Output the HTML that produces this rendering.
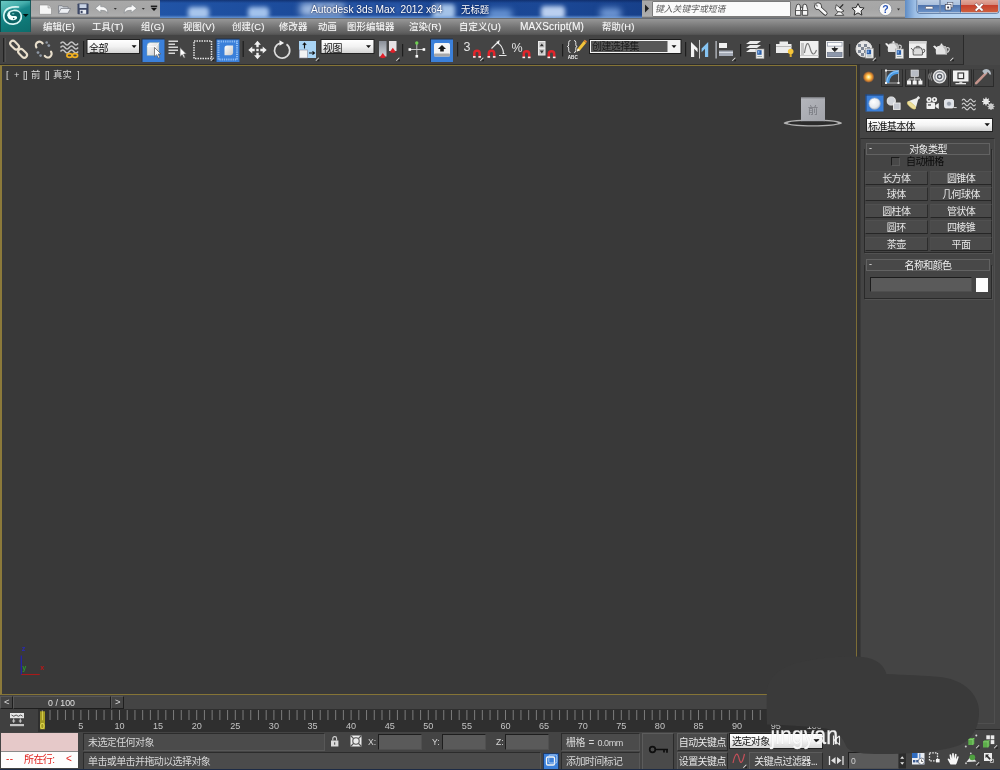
<!DOCTYPE html><html lang="zh"><head><meta charset="utf-8"><title>Autodesk 3ds Max 2012 x64 - 无标题</title><style>html,body{margin:0;padding:0;}
body{width:1000px;height:770px;overflow:hidden;background:#444;position:relative;font-family:"Liberation Sans","Noto Sans CJK SC",sans-serif;font-size:9.4px;color:#e4e4e4;}
div,span,svg{position:absolute;box-sizing:border-box;}
svg{overflow:visible;}
.t{white-space:nowrap;line-height:12px;will-change:transform;}
/* title */
#appbtn{left:0;top:0;width:31px;height:31.500px;background:linear-gradient(158deg,#6ac8c4 0%,#45aeac 26%,#16878a 40%,#0f7776 70%,#0d6d6c 100%);border-left:1px solid #0a4b4c;border-top:1px solid #0a4b4c;border-right:1px solid #1a5a5c;}
#qat{left:31px;top:0;width:129px;height:18px;background:linear-gradient(#707070 0,#a8a8a8 1.200px,#a6a6a6 9px,#aeaeae 16px,#8a8a8a 17.200px,#5e5e5e 18px);}
#titleblue{left:160px;top:0;width:482px;height:18px;background:linear-gradient(90deg,#2154a6 0,#1c4c9c 25%,#194592 50%,#1b4896 80%,#17408a 100%);overflow:hidden;}
#search{left:642px;top:0;width:170px;height:18px;background:linear-gradient(#707070 0,#a8a8a8 1.200px,#a6a6a6 9px,#aeaeae 16px,#8a8a8a 17.200px,#5e5e5e 18px);}
#infoc{left:791px;top:0;width:114px;height:18px;background:linear-gradient(#707070 0,#a8a8a8 1.200px,#a6a6a6 9px,#aeaeae 16px,#8a8a8a 17.200px,#5e5e5e 18px);}
#winctl{left:905px;top:0;width:95px;height:18px;background:linear-gradient(90deg,#5f8cc4 0,#9dbfe6 10px,#b4d2f2 30px,#c0daf4 100%);}
#menubar{left:31px;top:18px;width:969px;height:17px;background:linear-gradient(#39424e 0,#969696 1px,#8a8a8a 4px,#747474 9px,#5e5e5e 15px,#505050 17px);}
#menubar .t{top:3px;color:#f6f6f6;font-size:9.400px;letter-spacing:0.150px;text-shadow:0 0 1px rgba(0,0,0,.5);}
#toolbar{left:0;top:35px;width:964px;height:30px;background:#444;border-right:1px solid #2a2a2a;border-bottom:1px solid #2e2e2e;}
#tbright{left:964px;top:35px;width:36px;height:30px;background:#484848;}
/* viewport */
#viewport{left:0;top:65px;width:857px;height:629.500px;background:#393939;border:1.500px solid #857436;border-left:2.500px solid #8c7a3a;border-right:1.800px solid #7d6d36;}
/* panel */
#panel{left:858px;top:65px;width:142px;height:667px;background:#444;}
.btn{background:#4a4a4a;border-bottom:1px solid #262626;border-right:1px solid #2c2c2c;border-top:1px solid #505050;border-left:1px solid #4c4c4c;text-align:center;line-height:14px;color:#e6e6e6;height:14px;white-space:nowrap;}
.rollhead{background:#484848;border:1px solid #626262;height:12px;text-align:center;line-height:12px;color:#f0f0f0;white-space:nowrap;}
.rollframe{border:1px solid #2a2a2a;border-top:none;box-shadow:1px 1px 0 #525252;}
/* bottom */
#timeslider{left:0;top:695px;width:858px;height:14px;background:#444;}
#trackbar{left:0;top:707px;width:858px;height:25px;background:linear-gradient(#444 0,#2f2f2f 2.500px,#2f2f2f 100%);overflow:hidden;}
#ticks text{font-family:"Liberation Sans",sans-serif;font-size:9.100px;}
#status{left:0;top:732px;width:1000px;height:38px;background:#444;}
.field{background:#4b4b4b;border:1px solid #2c2c2c;border-right-color:#585858;border-bottom-color:#585858;height:18px;line-height:18px;padding-left:4px;white-space:nowrap;color:#d6d6d6;}
.sbtn{background:#4a4a4a;border:1px solid #5c5c5c;border-right-color:#2a2a2a;border-bottom-color:#2a2a2a;height:18px;line-height:18px;text-align:center;white-space:nowrap;color:#e8e8e8;}
.nfield{background:#5a5a5a;border:1px solid #1e1e1e;border-right-color:#505050;border-bottom-color:#505050;height:16px;}
.tab{border:1px solid #2b2b2b;border-top-color:#3c3c3c;background:#434343;}
.tsbtn{background:#444;border:1px solid #585858;border-right-color:#1e1e1e;border-bottom-color:#1e1e1e;}
.vl{top:1.500px;color:#dedede;font-size:9.400px;line-height:13px;}
.btn,.field,.sbtn,.rollhead{will-change:transform;}
#menubar .t{text-shadow:0 0 1px rgba(255,255,255,.55);}

#ticks,#tbicons,#titleicons,#panelicons,#boticons,#vpov{will-change:transform;}

.btn,.field,.sbtn,.rollhead{font-size:10px;letter-spacing:-0.600px;}
</style></head><body>
<!-- ================= TITLE BAR ================= -->
<div id="qat"></div>
<div id="titleblue">
  <div style="left:28.0px;top:7.0px;width:21.0px;height:12.0px;background:rgba(175,203,240,0.95);border-radius:4px;filter:blur(2.2px);"></div>
  <div style="left:88.0px;top:7.0px;width:21.0px;height:12.0px;background:rgba(170,200,240,0.95);border-radius:4px;filter:blur(2.2px);"></div>
  <div style="left:140.0px;top:3.0px;width:45.0px;height:13.0px;background:rgba(195,216,245,0.80);border-radius:4px;filter:blur(3.5px);"></div>
  <div style="left:185.0px;top:4.0px;width:80.0px;height:11.0px;background:rgba(70,120,205,0.50);border-radius:4px;filter:blur(4.0px);"></div>
  <div style="left:272.0px;top:4.0px;width:23.0px;height:15.0px;background:rgba(180,208,242,0.90);border-radius:4px;filter:blur(2.2px);"></div>
  <div style="left:328.0px;top:9.0px;width:24.0px;height:11.0px;background:rgba(120,165,225,0.80);border-radius:4px;filter:blur(3.0px);"></div>
  <div style="left:381.0px;top:6.0px;width:24.0px;height:13.0px;background:rgba(195,215,244,0.95);border-radius:4px;filter:blur(2.2px);"></div>
  <div style="left:440.0px;top:8.0px;width:21.0px;height:11.0px;background:rgba(130,170,228,0.80);border-radius:4px;filter:blur(3.0px);"></div>
  <div style="left:0;top:0;width:482px;height:3px;background:linear-gradient(rgba(10,30,80,.55),rgba(10,30,80,0));"></div>
  <div style="left:0;top:15px;width:482px;height:3px;background:linear-gradient(rgba(150,190,240,0),rgba(130,175,230,.7));"></div>
  <div class="t" id="apptitle" style="left:150.500px;top:4px;color:#fff;font-size:10.200px;text-shadow:0 0 3px rgba(20,40,90,.9),0 0 2px rgba(20,40,90,.9);">Autodesk 3ds Max&nbsp; 2012 x64</div>
  <div class="t" style="left:301px;top:4px;color:#fff;font-size:9.400px;text-shadow:0 0 3px rgba(20,40,90,.9),0 0 2px rgba(20,40,90,.9);">无标题</div>
</div>
<div id="search">
  <svg style="left:2px;top:4px" width="6" height="9" viewBox="0 0 6 9"><path d="M1 0.5 L5 4.5 L1 8.5Z" fill="#222"/></svg>
  <div style="left:10px;top:1px;width:139px;height:15.5px;background:#fafafa;border:1px solid #7a7a7a;border-radius:1px;"></div>
  <div class="t" style="left:13px;top:3px;color:#5c5c5c;font-style:italic;font-size:8.800px;">键入关键字或短语</div>
</div>
<div id="infoc"></div>
<div id="winctl"></div>
<div style="left:0;top:30px;width:31px;height:5px;background:linear-gradient(#666,#525252);"></div>
<div id="appbtn"></div>
<!-- ================= MENU BAR ================= -->
<div id="menubar">
  <div class="t" style="left:12px">编辑(E)</div>
  <div class="t" style="left:61px">工具(T)</div>
  <div class="t" style="left:110px">组(G)</div>
  <div class="t" style="left:152px">视图(V)</div>
  <div class="t" style="left:201px">创建(C)</div>
  <div class="t" style="left:248px">修改器</div>
  <div class="t" style="left:287px">动画</div>
  <div class="t" style="left:316px">图形编辑器</div>
  <div class="t" style="left:378px">渲染(R)</div>
  <div class="t" style="left:428px">自定义(U)</div>
  <div class="t" style="left:488.500px;font-size:10.100px;letter-spacing:0.100px;">MAXScript(M)</div>
  <div class="t" style="left:571px">帮助(H)</div>
</div>
<!-- ================= MAIN TOOLBAR ================= -->
<div id="toolbar"></div>
<div id="tbright"></div>

<svg id="titleicons" style="left:0;top:0" width="1000" height="36" viewBox="0 0 1000 36">
<defs>
<linearGradient id="wbtn" x1="0" y1="0" x2="0" y2="1"><stop offset="0" stop-color="#c4d4e8"/><stop offset="0.48" stop-color="#a9bfdc"/><stop offset="0.52" stop-color="#4f74ad"/><stop offset="1" stop-color="#6a92c8"/></linearGradient>
<linearGradient id="wclose" x1="0" y1="0" x2="0" y2="1"><stop offset="0" stop-color="#e4b4a8"/><stop offset="0.46" stop-color="#d68c7e"/><stop offset="0.52" stop-color="#c6402c"/><stop offset="1" stop-color="#d0603e"/></linearGradient>
</defs>
<!-- app logo -->
<ellipse cx="12.600" cy="16.600" rx="8" ry="7.400" fill="#064e50" opacity="0.550"/>
<path d="M18.500 7 C12 6.300 4.500 8 3.800 15 C3.200 21.500 8.500 24.400 13.500 24.100 C19 23.800 21.800 19.500 21.300 15.500 C20.800 11.500 17 10.200 13.500 10.500 C10 10.900 8 13 8 15.500" fill="none" stroke="#d9f5f3" stroke-width="1.700" stroke-linecap="round"/>
<path d="M7.600 15.500 C7.600 19.200 11 20.500 13.700 20.200 C16.300 19.900 17.600 18.500 17 17 C16.200 15.200 13.500 16.400 11.500 15.700 C9.800 15.100 9.600 13.400 10.600 12.200 C8.600 12.700 7.600 14 7.600 15.500Z" fill="#f4fffe"/>
<circle cx="13.700" cy="18.400" r="0.750" fill="#0e5e5e"/>
<ellipse cx="13.200" cy="13.700" rx="1.300" ry="0.700" fill="#8fdcd8" opacity=".8"/>
<path d="M22.800 14 h5.800 l-2.900 3z" fill="#041414"/>
<!-- QAT icons -->
<path d="M39.500 5 h8.500 l3.500 3 v6.300 h-12z" fill="#f6f6f6" stroke="#8a8a8a" stroke-width="0.600"/><path d="M48 5 v3 h3.500" fill="#d8d8d8" stroke="#8a8a8a" stroke-width="0.500"/>
<path d="M58.500 13.300 v-7.600 h3.600 l1 1.200 h5 v1.600" fill="#d4d8de" stroke="#70747c" stroke-width="0.700"/><path d="M58.500 13.300 l2.400 -4.800 h9.600 l-2.600 4.800z" fill="#eef0f4" stroke="#70747c" stroke-width="0.700"/>
<rect x="77.500" y="3.500" width="11" height="10.800" rx="0.800" fill="#3d4866"/><rect x="79.500" y="4.200" width="7" height="3.800" fill="#c9d4e6"/><rect x="79.800" y="9.800" width="6.400" height="4" fill="#e8ecf2"/><rect x="80.600" y="10.800" width="2" height="2.400" fill="#3d4866"/>
<path d="M95.300 8.300 l5.400 -4.300 v2.600 q7 -0.400 7.200 6.600 q-2 -3.400 -7.200 -3 v2.500z" fill="#f8f8f8" stroke="#80848a" stroke-width="0.600"/>
<path d="M113.800 8 h3 l-1.500 1.800z" fill="#333"/>
<path d="M136.700 8.300 l-5.400 -4.300 v2.600 q-7 -0.400 -7.200 6.600 q2 -3.400 7.200 -3 v2.500z" fill="#f8f8f8" stroke="#80848a" stroke-width="0.600"/>
<path d="M141.800 8 h3 l-1.500 1.800z" fill="#333"/>
<rect x="150.800" y="5.600" width="6.400" height="1.300" fill="#111"/><path d="M150.800 7.800 h6.400 l-3.200 3.200z" fill="#111"/>
<!-- infocenter -->
<g fill="#f6f6f6" stroke="#2c2c2c" stroke-width="0.800" stroke-linejoin="round"><path d="M795.500 15.300 v-5.500 l1.300 -5 q1.600 -1.200 3.200 0 l0.800 5 v5.500z"/><path d="M802.400 15.300 v-5.500 l0.800 -5 q1.600 -1.200 3.200 0 l1.300 5 v5.500z"/><rect x="800.600" y="7.300" width="2" height="3.200"/></g>
<path d="M795.800 10.500 h4.800 M802.600 10.500 h4.800" stroke="#555" stroke-width="0.900"/>
<g stroke-linecap="round"><path d="M819 7.500 L825.300 13.300" stroke="#2c2c2c" stroke-width="4.400"/><circle cx="818" cy="6.300" r="3.700" fill="#2c2c2c"/><path d="M819 7.500 L825.300 13.300" stroke="#f6f6f6" stroke-width="2.900"/><circle cx="818" cy="6.300" r="3" fill="#f6f6f6"/><path d="M814.300 3.300 l2.900 2.700" stroke="#8a8a8a" stroke-width="1.500"/></g>
<g stroke="#2c2c2c" stroke-width="0.800" fill="#f6f6f6" stroke-linejoin="round"><path d="M836.200 4.800 q-2.200 4.400 1.200 6.800 q3.200 1.800 6.600 -0.600z"/><path d="M838.600 11.800 l-3.800 3.500 h9 l-3 -3.300z"/></g>
<path d="M839.600 8.200 l3.600 -3.800" fill="none" stroke="#222" stroke-width="1.200"/>
<path d="M858 3.600 l1.900 3.900 l4.200 0.500 l-3.100 2.900 l0.900 4.200 l-3.900 -2.200 l-3.900 2.200 l0.900 -4.200 l-3.100 -2.900 l4.200 -0.500z" fill="#f6f6f6" stroke="#2c2c2c" stroke-width="1" stroke-linejoin="round"/>
<circle cx="885.500" cy="9.300" r="6.300" fill="#fafafa" stroke="#7a8088" stroke-width="0.700"/>
<text x="885.500" y="13.200" text-anchor="middle" font-family="Liberation Sans,sans-serif" font-weight="bold" font-size="10.500" fill="#2a55b8">?</text>
<path d="M897 8.600 h3 l-1.500 1.800z" fill="#333"/>
<!-- window controls -->
<rect x="917" y="-2" width="82" height="15.300" rx="2.500" fill="#e4eefa" stroke="#3c5a88" stroke-width="0.800"/>
<rect x="918" y="-2" width="21.500" height="14.300" fill="url(#wbtn)"/>
<rect x="940.500" y="-2" width="19.500" height="14.300" fill="url(#wbtn)"/>
<rect x="961" y="-2" width="37" height="14.300" rx="1.500" fill="url(#wclose)"/>
<rect x="939.500" y="0" width="1" height="12.500" fill="#3c5a88"/><rect x="960" y="0" width="1" height="12.500" fill="#3c5a88"/>
<rect x="925.500" y="6.500" width="7.400" height="2.400" rx="0.500" fill="#fff" stroke="#445" stroke-width="0.500"/>
<rect x="947.300" y="2.600" width="5.600" height="5" fill="#e8eef8" stroke="#445" stroke-width="0.500"/><rect x="945.200" y="4.600" width="5.800" height="5.400" fill="#fff" stroke="#334" stroke-width="0.600"/><rect x="947.200" y="6.500" width="1.900" height="1.900" fill="#334"/>
<path d="M976.300 3 l2.800 2.600 l2.800 -2.600 l1.700 1.600 l-2.700 2.700 l2.700 2.700 l-1.700 1.600 l-2.800 -2.600 l-2.800 2.600 l-1.700 -1.600 l2.700 -2.700 l-2.700 -2.700z" fill="#fff" stroke="#6a3030" stroke-width="0.500"/>
</svg>

<svg id="tbicons" style="left:0;top:0" width="1000" height="70" viewBox="0 0 1000 70">
<defs>
  <g id="magnet"><path d="M1.3 8 V4 a2.7 2.7 0 0 1 5.4 0 V8" fill="none" stroke="#e0252b" stroke-width="2.5"/><rect x="0" y="6.6" width="2.6" height="1.6" fill="#f4f4f4"/><rect x="5.4" y="6.6" width="2.6" height="1.6" fill="#f4f4f4"/></g>
  <g id="fly"><path d="M0 3 L3 0 L3.6 0.6 L0.6 3.6Z" fill="#e8e8e8"/><path d="M1.4 3.8 L3.8 1.4 L3.8 3.8Z" fill="#1c1c1c"/></g>
  <g id="cursor"><path d="M0 0 L0 9.2 L2.2 7.2 L3.8 10.6 L5.2 10 L3.7 6.6 L6.4 6.4Z" fill="#fff" stroke="#555" stroke-width="0.7"/></g>
  <g id="doc"><rect x="0" y="0" width="8" height="9.6" fill="#ececec" stroke="#9a9a9a" stroke-width="0.6"/><rect x="1.2" y="1.2" width="4.4" height="4.6" fill="#2c5fa8"/><rect x="2" y="2" width="1.4" height="2.4" fill="#7fb0e8"/><rect x="1.4" y="7" width="4.6" height="1" fill="#9aa"/></g>
  <linearGradient id="ddg" x1="0" y1="0" x2="0" y2="1"><stop offset="0" stop-color="#ffffff"/><stop offset="0.5" stop-color="#f2f2f2"/><stop offset="1" stop-color="#d4d4d4"/></linearGradient>
  <linearGradient id="cube" x1="0" y1="0" x2="1" y2="1"><stop offset="0" stop-color="#ffffff"/><stop offset="1" stop-color="#c8c8c8"/></linearGradient>
</defs>
<!-- grip -->
<rect x="3" y="38" width="1.6" height="24" fill="#222"/><rect x="4.6" y="38" width="1" height="24" fill="#5a5a5a"/>
<!-- link -->
<g fill="none" stroke="#e9dfcc" stroke-width="2.100">
  <rect x="-2.700" y="-5.100" width="5.400" height="10.200" rx="2.700" transform="translate(14.600,45.200) rotate(-45)"/>
  <rect x="-2.700" y="-5.100" width="5.400" height="10.200" rx="2.700" transform="translate(22.600,53.300) rotate(-45)"/>
</g>
<!-- unlink -->
<g fill="none" stroke="#e9dfcc" stroke-width="2.200" stroke-linecap="round">
  <path d="M36.400 47.300 a3.600 3.600 0 0 1 6.200 -3.900"/>
  <path d="M51 51.600 a3.600 3.600 0 0 1 -6.200 4.200"/>
</g>
<g fill="#8e97a4"><circle cx="46.700" cy="42.500" r="1.300"/><circle cx="48.800" cy="45.600" r="1.400"/><circle cx="38" cy="52.600" r="1.400"/><circle cx="40.600" cy="55.600" r="1.300"/></g>
<!-- bind to space warp -->
<g fill="none" stroke="#c4c4c4" stroke-width="1.5">
  <path d="M60.5 43.5 q2.2 -3 4.4 0 t4.4 0 t4.4 0 t4.4 0"/>
  <path d="M60.5 47.5 q2.2 -3 4.4 0 t4.4 0 t4.4 0 t4.4 0"/>
  <path d="M60.5 51.5 q2.2 -3 4.4 0 t4.4 0 t4.4 0 t4.4 0"/>
</g>
<g fill="none" stroke="#f0b020" stroke-width="1.7"><ellipse cx="69.5" cy="55.5" rx="2.6" ry="1.9"/><ellipse cx="75" cy="55.5" rx="2.6" ry="1.9"/></g>
<!-- sep -->
<rect x="83" y="41" width="1.2" height="16" fill="#1e1e1e"/>
<!-- dropdown all -->
<rect x="86.5" y="39" width="53.5" height="15" fill="#222"/>
<rect x="87.5" y="40" width="51.5" height="13" fill="url(#ddg)"/>
<path d="M131.6 45.2 h5 l-2.5 2.8z" fill="#111"/>
<!-- select object (active) -->
<rect x="141.500" y="38.500" width="23" height="23.500" fill="#20304a"/><rect x="142.500" y="39.500" width="22" height="22.500" fill="#3b80da"/>
<path d="M147 46 q0 -3.5 3.5 -3.5 h8.5 v10 q0 3 -3 3 h-9z" fill="url(#cube)" stroke="#8aa" stroke-width="0.5"/>
<path d="M147 46.5 h9 v9 M156 46.5 l3 -4" fill="none" stroke="#fff" stroke-width="0.8" opacity=".8"/>
<use href="#cursor" x="154.5" y="47.5"/>
<!-- select by name -->
<g fill="#d8d8d8"><rect x="168.5" y="40.5" width="9.5" height="1.5"/><rect x="168.5" y="43.5" width="6.5" height="1.5"/><rect x="168.5" y="46.5" width="9.5" height="1.5"/><rect x="168.5" y="49.5" width="9.5" height="1.5"/><rect x="168.5" y="52.5" width="6.5" height="1.5"/></g>
<use href="#cursor" x="180" y="47.5"/>
<!-- rect region -->
<rect x="194" y="41" width="17.5" height="17.5" fill="none" stroke="#e4e4e4" stroke-width="1.5" stroke-dasharray="1.5 1"/>
<use href="#fly" x="210.5" y="57.5"/>
<!-- window/crossing active -->
<rect x="215.500" y="38.500" width="24" height="23.500" fill="#20304a"/><rect x="216.500" y="39.500" width="23" height="22.500" fill="#3b80da"/>
<rect x="218.5" y="41.5" width="18.5" height="18" fill="none" stroke="#8fbdf5" stroke-width="2" stroke-dasharray="1.2 1"/>
<path d="M224.5 48 q0 -2.6 2.6 -2.6 h6 v7.4 q0 2.4 -2.4 2.4 h-6.2z" fill="url(#cube)"/>
<!-- sep -->
<rect x="242.6" y="41" width="1.2" height="16" fill="#1e1e1e"/>
<!-- move -->
<g fill="#f0f0f0"><path d="M257.5 40.8 l3.4 4 h-2.2 v2.4 h-2.4 v-2.4 h-2.2z"/><path d="M257.5 59.2 l3.4 -4 h-2.2 v-2.4 h-2.4 v2.4 h-2.2z"/><path d="M248.3 50 l4 -3.4 v2.2 h2.4 v2.4 h-2.4 v2.2z"/><path d="M266.700 50 l-4 -3.400 v2.200 h-2.400 v2.400 h2.400 v2.200z"/><rect x="256.300" y="48.800" width="2.400" height="2.400"/></g>
<!-- rotate -->
<path d="M286.500 44.300 a7.600 7.600 0 1 1 -6.500 -1.100" fill="none" stroke="#dcdcdc" stroke-width="1.700"/>
<path d="M279.500 40.300 l4.600 2.700 l-4.600 2.700z" fill="#f4f4f4"/>
<!-- scale -->
<rect x="299" y="41" width="17" height="17" fill="#a9d4f5"/>
<rect x="299.500" y="50" width="8" height="8" fill="#f2f2f2" stroke="#889" stroke-width="0.600"/>
<path d="M304.500 48.500 v-5 M302.800 45 l1.700 -2 l1.700 2" stroke="#111" stroke-width="1.100" fill="none"/>
<path d="M309 53 h5 M312.500 51.300 l2 1.700 l-2 1.700" stroke="#111" stroke-width="1.100" fill="none"/>
<use href="#fly" x="315.500" y="57.500"/>
<!-- dropdown view -->
<rect x="320.500" y="39" width="54" height="15" fill="#222"/>
<rect x="321.500" y="40" width="52" height="13" fill="url(#ddg)"/>
<path d="M366 45.200 h5 l-2.500 2.800z" fill="#111"/>
<!-- pivot -->
<linearGradient id="pv1" x1="0" y1="0" x2="0" y2="1"><stop offset="0" stop-color="#8a8f98"/><stop offset="1" stop-color="#d0d4da"/></linearGradient>
<rect x="379" y="41" width="7.500" height="15.500" fill="url(#pv1)"/>
<path d="M379.800 57.300 l3 -4.300 l3 4.300 l-3 1z" fill="#e0202a"/>
<rect x="389" y="41" width="7.500" height="10" fill="#e8e4e6"/>
<path d="M389.800 52 l3 -4.300 l3 4.300 l-3 1z" fill="#e0202a"/>
<use href="#fly" x="396" y="57.500"/>
<rect x="402" y="44" width="1.200" height="12.500" fill="#1e1e1e"/>
<!-- manipulate -->
<path d="M410 49.500 h14 M416.800 44 v12" stroke="#cfcfcf" stroke-width="0.900" fill="none"/>
<circle cx="416.800" cy="43" r="1.700" fill="#6dd050"/>
<rect x="408.500" y="48.200" width="2.600" height="2.600" fill="#fff"/><rect x="422.600" y="48.200" width="2.600" height="2.600" fill="#fff"/><rect x="415.500" y="55" width="2.600" height="2.600" fill="#fff"/>
<!-- keyboard shortcut override (active) -->
<rect x="430" y="38.500" width="23" height="23.500" fill="#20304a"/><rect x="431" y="39.500" width="22" height="22.500" fill="#3b80da"/>
<rect x="434" y="43" width="16" height="13.500" rx="1.500" fill="#f4f4f4"/>
<rect x="434" y="53.500" width="16" height="3" rx="1" fill="#a8a8a8"/>
<path d="M442 45 l4 4 h-2.200 v2.600 h-3.600 v-2.600 h-2.200z" fill="#1a1a1a"/>
<rect x="457" y="42" width="1.200" height="14.500" fill="#1e1e1e"/>
<!-- snaps -->
<text x="463.500" y="51.300" font-family="Liberation Sans,sans-serif" font-size="12.500" fill="#e4e4e4">3</text>
<use href="#magnet" x="473" y="49.500"/>
<use href="#fly" x="480" y="57.500"/>
<!-- angle snap -->
<use href="#magnet" x="487.500" y="49.500"/>
<path d="M491.500 48.500 L499.500 40.500 M497 42.500 q6 3 6.500 11 M499 55.500 h7.500 M502.500 53.500 h2" stroke="#e8e8e8" stroke-width="1.100" fill="none"/>
<path d="M496.400 41.600 l3 0.200 l-1.200 2.600z" fill="#fff"/>
<!-- percent snap -->
<text x="511.500" y="51.800" font-family="Liberation Sans,sans-serif" font-size="12.500" fill="#e4e4e4">%</text>
<use href="#magnet" x="522.500" y="50"/>
<!-- spinner snap -->
<rect x="538" y="41" width="7.500" height="14.500" fill="#ededed"/>
<rect x="539" y="42" width="5.500" height="5.600" fill="#c8c8c8"/><rect x="539" y="49" width="5.500" height="5.600" fill="#c8c8c8"/>
<path d="M539.800 46.200 l2 -2.800 l2 2.800z M539.800 50.600 l2 2.800 l2 -2.800z" fill="#333"/>
<use href="#magnet" x="547.500" y="50"/>
<rect x="562" y="44" width="1.200" height="12.500" fill="#1e1e1e"/>
<!-- named selection sets -->
<path d="M570.500 40.500 q-1.800 0 -1.800 1.800 v2.600 q0 1.400 -1.400 1.600 q1.400 0.200 1.400 1.600 v2.600 q0 1.800 1.800 1.800 M574 40.500 q1.800 0 1.800 1.800 v2.600 q0 1.400 1.400 1.600 q-1.400 0.200 -1.400 1.600 v2.600 q0 1.800 -1.800 1.800" stroke="#e4e4e4" stroke-width="1" fill="none"/>
<path d="M576.800 51.600 l0.900 -3.200 l6 -7.400 l2.400 1.900 l-6 7.400z" fill="#f2c43a"/><path d="M576.800 51.600 l0.900 -3.200 l2.400 1.900z" fill="#f8f8f8"/><path d="M583.700 41 l2.400 1.900 l0.900 -1.300 l-2.200 -1.800z" fill="#e88a30"/>
<text x="567.800" y="59.300" font-family="Liberation Sans,sans-serif" font-size="4.600" font-weight="bold" fill="#f0f0f0">ABC</text>
<!-- named sel dropdown -->
<rect x="589" y="39" width="92.500" height="15" fill="#1c1c1c"/>
<rect x="590" y="40" width="90.500" height="13" fill="#f4f4f4"/>
<rect x="591" y="41" width="76.500" height="11" fill="#575757"/>
<path d="M671.500 45.200 h5 l-2.500 2.800z" fill="#111"/>
<rect x="685" y="42" width="1.200" height="14.500" fill="#1e1e1e"/>
<!-- mirror -->
<path d="M691 42 l6.600 6.600 v3.600 l-3.400 -3.400 v8.200 h-3.200z" fill="#f2f2f2"/>
<rect x="699" y="40" width="1" height="18.500" fill="#c8c8c8"/>
<path d="M708.200 42 l-6.600 6.600 v3.600 l3.400 -3.400 v8.200 h3.200z" fill="#86c4f2"/>
<!-- align -->
<rect x="715.500" y="41" width="1.200" height="17.500" fill="#c4c8d0"/>
<rect x="719" y="43" width="8" height="5" fill="#f0f0f0"/>
<rect x="719" y="50.500" width="14" height="5.500" fill="#a4aab6"/><rect x="719" y="52" width="14" height="1" fill="#d8dce4"/>
<use href="#fly" x="732" y="57.500"/>
<rect x="740" y="44" width="1.200" height="12.500" fill="#1e1e1e"/>
<!-- layers -->
<g fill="#ececec"><path d="M750 41 h11 l-4 3 h-11z"/><path d="M750 45 h11 l-4 3 h-11z"/><path d="M750 49 h11 l-4 3 h-11z"/></g>
<use href="#doc" x="756" y="49"/>
<rect x="769" y="44" width="1.200" height="12.500" fill="#1e1e1e"/>
<!-- graphite -->
<path d="M776 44 h3.500 v-2.500 h8.500 v2.500 h3.500 v9 h-15.500z" fill="#ececec"/><rect x="776" y="46" width="15.500" height="1" fill="#b8b8b8"/>
<circle cx="790.700" cy="51.500" r="2.800" fill="#f6c63a"/><rect x="789.700" y="54" width="2" height="3" fill="#e0b030"/>
<!-- curve editor -->
<rect x="800" y="41" width="18.500" height="17" fill="#efefef"/>
<rect x="801" y="43" width="3" height="13" fill="#c4c4c4"/><rect x="800" y="55" width="18.500" height="1" fill="#c8c8c8"/>
<path d="M804.500 53 q2.500 -16 5.500 -5 t6.500 2" stroke="#777" stroke-width="1.100" fill="none"/>
<!-- schematic -->
<rect x="826" y="41" width="17.500" height="17" fill="#eeeeee"/>
<rect x="827.500" y="42.500" width="14.500" height="3.600" fill="#fdfdfd" stroke="#8a93a4" stroke-width="0.700"/>
<rect x="827.500" y="52.600" width="14.500" height="4" fill="#8d97aa" stroke="#6a7488" stroke-width="0.700"/>
<path d="M834.700 46.500 v2.500 M832 48.600 h5.600 l-2.800 3z" stroke="#222" stroke-width="1" fill="#222"/>
<rect x="849" y="44" width="1.200" height="12.500" fill="#1e1e1e"/>
<!-- material editor -->
<circle cx="864" cy="49" r="8" fill="#e6e6e6"/>
<g fill="#7f8794"><path d="M858 44 h3 v3 h-3z M864 44 h3 v3 h-3z M861 47 h3 v3 h-3z M867 47 h3 v3 h-3z M858 50 h3 v3 h-3z M864 50 h3 v3 h-3z M861 53 h3 v3 h-3z"/></g>
<circle cx="864" cy="49" r="8" fill="none" stroke="#d8d8d8" stroke-width="1"/>
<use href="#doc" x="865.500" y="48.500"/>
<use href="#fly" x="872.500" y="57.500"/>
<rect x="879" y="44" width="1.200" height="12.500" fill="#1e1e1e"/>
<!-- render setup teapot -->
<g id="teapot" transform="translate(885,41)"><path d="M4.600 2.600 h7.800 q2.800 3.600 1.400 8.400 h-10.600 q-1.400 -4.800 1.400 -8.400z" fill="#e2e2e2"/><path d="M4.200 7.600 L0 2.800 l1.700 -0.900 L5.400 5z" fill="#ececec"/><path d="M13.400 4.200 q3.400 -0.600 2.800 2.300 q-0.500 2.100 -2.700 2.500" stroke="#d4d4d4" stroke-width="1.100" fill="none"/><rect x="6.600" y="1.500" width="3.800" height="1.300" fill="#cfcfcf"/><circle cx="8.500" cy="0.900" r="1" fill="#ececec"/><path d="M9.500 3 q3.500 3 3 8 h1.300 q1.400 -4.800 -1.400 -8.400z" fill="#b8b8b8"/></g>
<use href="#doc" x="895.500" y="49"/>
<!-- rendered frame window -->
<rect x="909" y="41" width="17.500" height="17" fill="#efefef"/>
<rect x="909" y="41" width="17.500" height="2.600" fill="#d0d0d0"/>
<path d="M914.500 47.800 h6.600 q2.400 3 1.200 7.200 h-9 q-1.200 -4.200 1.200 -7.200z" fill="#dcdcdc" stroke="#555" stroke-width="0.900"/><path d="M914 51.300 l-3 -3.300 M922.500 49.200 q2.800 -0.400 2.300 1.800 q-0.500 1.800 -2.300 2 M916.300 47.600 v-1.200 h3 v1.200" stroke="#555" stroke-width="0.900" fill="none"/>
<!-- render production -->
<use href="#teapot" x="48" y="2.500"/>
<use href="#fly" x="950" y="57.500"/>
</svg>
<div class="t" style="left:89px;top:42px;color:#111;font-size:10px;letter-spacing:-0.600px;line-height:14px;">全部</div>
<div class="t" style="left:323px;top:42px;color:#111;font-size:10px;letter-spacing:-0.600px;line-height:14px;">视图</div>
<div class="t" style="left:592px;top:40px;color:#1a1a1a;font-size:10px;letter-spacing:-0.600px;line-height:14px;">创建选择集</div>

<!-- ================= VIEWPORT ================= -->
<div id="viewport">
  <!-- inside coords: page x - 2.5, page y - 66.5 -->
  <div class="t vl" style="left:4.000px;">[</div>
  <div class="t vl" style="left:11.500px;">+</div>
  <div class="t vl" style="left:21.000px;letter-spacing:-0.700px;">[]</div>
  <div class="t vl" style="left:29.200px;">前</div>
  <div class="t vl" style="left:43.000px;letter-spacing:-0.700px;">[]</div>
  <div class="t vl" style="left:51.000px;">真实</div>
  <div class="t vl" style="left:75.200px;">]</div>
</div>

<!-- ================= COMMAND PANEL ================= -->
<div id="panel">
  <!-- coordinates inside panel: page x - 858, page y - 65 -->
  <!-- tab row -->
  <div class="tab" style="left:23px;top:3.500px;width:22px;height:18px;"></div>
  <div class="tab" style="left:47px;top:3.500px;width:21px;height:18px;"></div>
  <div class="tab" style="left:70px;top:3.500px;width:21px;height:18px;"></div>
  <div class="tab" style="left:92px;top:3.500px;width:22px;height:18px;"></div>
  <div class="tab" style="left:115px;top:3.500px;width:21px;height:18px;"></div>
  <!-- geometry active -->
  
  <!-- dropdown -->
  <div style="left:7.500px;top:52.500px;width:127.500px;height:14.500px;background:linear-gradient(#ffffff,#f4f4f4 50%,#d2d2d2);border:1px solid #222;"></div>
  <div class="t" style="left:10px;top:54.500px;color:#111;font-size:10px;letter-spacing:-0.600px;line-height:14px;">标准基本体</div>
  <!-- scroll area frame -->
  <div style="left:-1px;top:0;width:3px;height:667px;background:#333;"></div>
  <div style="left:2px;top:73px;width:135px;height:586px;border:1px solid #2c2c2c;border-left-color:#3a3a3a;border-right-color:#4f4f4f;border-bottom-color:#4f4f4f;background:#444;"></div>
  <div style="left:0;top:664px;width:142px;height:1.300px;background:#2a2a2a;"></div>
  <!-- rollout 1 -->
  <div class="rollframe" style="left:5.500px;top:84px;width:128.500px;height:104px;"></div>
  <div class="rollhead" style="left:8px;top:78px;width:124px;">对象类型</div>
  <div class="t" style="left:11px;top:77px;color:#eee;font-size:9px;">-</div>
  <div style="left:33px;top:92px;width:9px;height:9px;border:1.500px solid #1c1c1c;border-right-color:#585858;border-bottom-color:#585858;background:#484848;"></div>
  <div class="t" style="left:48px;top:91px;color:#0c0c0c;font-size:10px;letter-spacing:-0.600px;">自动栅格</div>
  <div class="btn" style="left:7px;top:105.500px;width:62.500px;">长方体</div>
  <div class="btn" style="left:71.500px;top:105.500px;width:62px;">圆锥体</div>
  <div class="btn" style="left:7px;top:122px;width:62.500px;">球体</div>
  <div class="btn" style="left:71.500px;top:122px;width:62px;">几何球体</div>
  <div class="btn" style="left:7px;top:138.500px;width:62.500px;">圆柱体</div>
  <div class="btn" style="left:71.500px;top:138.500px;width:62px;">管状体</div>
  <div class="btn" style="left:7px;top:155px;width:62.500px;">圆环</div>
  <div class="btn" style="left:71.500px;top:155px;width:62px;">四棱锥</div>
  <div class="btn" style="left:7px;top:171.500px;width:62.500px;">茶壶</div>
  <div class="btn" style="left:71.500px;top:171.500px;width:62px;">平面</div>
  <!-- rollout 2 -->
  <div class="rollframe" style="left:5.500px;top:200px;width:128.500px;height:33.500px;"></div>
  <div class="rollhead" style="left:8px;top:193.500px;width:124px;">名称和颜色</div>
  <div class="t" style="left:11px;top:192.500px;color:#eee;font-size:9px;">-</div>
  <div style="left:11.500px;top:212px;width:102px;height:15px;background:#5a5a5a;border:1.500px solid #1c1c1c;border-right-color:#4e4e4e;border-bottom-color:#4e4e4e;"></div>
  <div style="left:117.500px;top:212.500px;width:12.500px;height:14.500px;background:#fdfdfd;"></div>
</div>

<svg id="panelicons" style="left:0;top:0" width="1000" height="140" viewBox="0 0 1000 140">
<defs>
<radialGradient id="sun"><stop offset="0" stop-color="#fffbe6"/><stop offset="0.25" stop-color="#ffe27a"/><stop offset="0.5" stop-color="#f7a93a"/><stop offset="0.75" stop-color="#e8872a" stop-opacity="0.75"/><stop offset="1" stop-color="#d87020" stop-opacity="0"/></radialGradient>
<radialGradient id="sph" cx="0.4" cy="0.35" r="0.7"><stop offset="0" stop-color="#ffffff"/><stop offset="0.7" stop-color="#e4e8ee"/><stop offset="1" stop-color="#b4bcc8"/></radialGradient>
</defs>
<!-- create: sun -->
<circle cx="868.600" cy="77" r="5.900" fill="url(#sun)"/>
<g stroke="#f0a030" stroke-width="0.9" opacity="0"><path d="M869.3 69.500 v2 M869.3 82.500 v2 M861.800 77 h2 M874.800 77 h2 M864 71.700 l1.400 1.400 M873.200 80.900 l1.400 1.400 M864 82.300 l1.400 -1.400 M873.200 73.100 l1.400 -1.400"/></g>
<!-- modify -->
<rect x="886" y="70.500" width="12.500" height="12.500" fill="none" stroke="#d8d8d8" stroke-width="0.700"/>
<path d="M887.500 83 q0.500 -10.500 11 -11" fill="none" stroke="#4a9be6" stroke-width="3.400"/>
<path d="M886.600 83 q0.500 -11 11.800 -11.800" fill="none" stroke="#a8d4fa" stroke-width="0.800"/>
<g fill="#f0f0f0"><rect x="885" y="69.500" width="2" height="2"/><rect x="897.500" y="82" width="2" height="2"/><rect x="885" y="82" width="2" height="2"/></g>
<!-- hierarchy -->
<rect x="911" y="70" width="7.500" height="6.500" fill="#b8bcc4" stroke="#e4e4e4" stroke-width="0.600"/>
<path d="M914.700 76.500 v2.500 M909 81 v-2 h11.500 v2 M914.700 79 v2" stroke="#e0e0e0" stroke-width="0.900" fill="none"/>
<g fill="#f4f4f4"><rect x="907" y="80.500" width="4" height="4"/><rect x="912.700" y="80.500" width="4" height="4"/><rect x="918.400" y="80.500" width="4" height="4"/></g>
<!-- motion -->
<circle cx="939.600" cy="76.600" r="6.200" fill="#8c9098" stroke="#e8e8e8" stroke-width="1.300"/>
<circle cx="939.600" cy="76.600" r="3.400" fill="#5a5e66" stroke="#f4f4f4" stroke-width="1.300"/>
<circle cx="939.600" cy="76.600" r="1.300" fill="#dfe3ea"/>
<path d="M931.500 72.500 q-2 4 0 8 M929.300 73.500 q-1.300 3 0 6" stroke="#a8a8a8" stroke-width="0.800" fill="none"/>
<!-- display -->
<rect x="953" y="70.500" width="15.500" height="11" fill="#f2f2f2"/>
<rect x="958" y="73" width="5.600" height="5.600" fill="#f2f2f2" stroke="#3a3a3a" stroke-width="1.200"/>
<rect x="959.300" y="81.500" width="3" height="1.600" fill="#d0d0d0"/><rect x="955.500" y="83" width="10.500" height="1.300" fill="#e8e8e8"/>
<!-- utilities hammer -->
<path d="M976.200 83.200 l10 -10.400" stroke="#c4948c" stroke-width="2.600" stroke-linecap="round"/>
<path d="M982.200 71 q3 -3.200 6.600 -1.200 q2.200 1.600 2.400 4.600 l-1.600 0.200 q-0.600 -2 -2.200 -2.600 l-2.600 2.400z" fill="#b4bcc4"/>
<!-- geometry (active) -->
<rect x="865.500" y="94.500" width="18" height="17" fill="#3b80da"/>
<rect x="865.500" y="94.500" width="18" height="1" fill="#1e3a68"/><rect x="865.500" y="94.500" width="1" height="17" fill="#1e3a68"/>
<circle cx="874.600" cy="103.600" r="5.700" fill="url(#sph)" stroke="#9fb0c8" stroke-width="0.700"/>
<!-- shapes -->
<circle cx="891.300" cy="101" r="4.100" fill="#d0d4da" stroke="#f4f4f4" stroke-width="0.900"/>
<rect x="893.500" y="103" width="6.600" height="6.400" fill="#c2c6ce" stroke="#f0f0f0" stroke-width="0.900"/>
<!-- lights -->
<path d="M918.800 97.200 L907.600 101.600 Q908.800 107.600 915.600 108.800 Z" fill="#f1f1ec"/>
<ellipse cx="911.400" cy="105.400" rx="5.200" ry="2" transform="rotate(40 911.400 105.400)" fill="#efe09a" stroke="#cdb95c" stroke-width="0.500"/>
<path d="M916.600 97.600 l1.900 -1.700 l1.700 2 l-1.900 1.700z" fill="#e6e6e6"/>
<!-- cameras -->
<g fill="#f0f0f0"><circle cx="929" cy="99.500" r="2.600"/><circle cx="934.500" cy="99.500" r="2.600"/><rect x="926.500" y="102.500" width="8.500" height="6.500" rx="0.800"/><path d="M935.500 105 l3.300 -2 v6 l-3.300 -2z"/></g>
<g fill="#444"><circle cx="929" cy="99.500" r="0.900"/><circle cx="934.500" cy="99.500" r="0.900"/><rect x="928" y="104.300" width="3" height="1.300"/></g>
<!-- helpers: tape -->
<rect x="944.500" y="99.500" width="9" height="8.500" rx="1.500" fill="#dfe3ea" stroke="#f4f4f4" stroke-width="0.800"/>
<circle cx="949" cy="103.700" r="2.500" fill="#9aa2ae" stroke="#f0f0f0" stroke-width="0.600"/>
<path d="M953.500 107.600 h3.200" stroke="#e0e0e0" stroke-width="1"/>
<!-- spacewarps -->
<g fill="none" stroke="#cfcfcf" stroke-width="1.200">
<path d="M962 100.500 q1.700 -2.600 3.400 0 t3.400 0 t3.400 0 t3.400 0"/>
<path d="M962 104.500 q1.700 -2.600 3.400 0 t3.400 0 t3.400 0 t3.400 0"/>
<path d="M962 108.500 q1.700 -2.600 3.400 0 t3.400 0 t3.400 0 t3.400 0"/>
</g>
<!-- systems: gears -->
<g fill="#f0f0f0"><circle cx="986" cy="101.500" r="2.800"/><circle cx="991" cy="106.500" r="2.500"/></g>
<g stroke="#e8e8e8" stroke-width="1.200"><path d="M986 97.500 v8 M982 101.500 h8 M983.200 98.700 l5.600 5.600 M983.200 104.300 l5.600 -5.600"/><path d="M991 103 v7 M987.500 106.500 h7 M988.500 104 l5 5 M988.500 109 l5 -5" stroke="#c8c8c8"/></g>
<!-- dropdown arrow -->
<path d="M984.500 123.300 h5.400 l-2.700 3z" fill="#111"/>
</svg>

<div id="trackbar">
<div style="left:0;top:0;width:37.500px;height:25px;background:#404040;"></div>
<svg id="ticks" style="top:2px" width="1000" height="24" viewBox="0 0 1000 24">
<rect x="41.80" y="1" width="1" height="10" fill="#7c7c7c"/>
<rect x="49.52" y="1" width="1" height="10" fill="#7c7c7c"/>
<rect x="57.24" y="1" width="1" height="10" fill="#7c7c7c"/>
<rect x="64.96" y="1" width="1" height="10" fill="#7c7c7c"/>
<rect x="72.68" y="1" width="1" height="10" fill="#7c7c7c"/>
<rect x="80.40" y="1" width="1" height="10" fill="#7c7c7c"/>
<rect x="88.12" y="1" width="1" height="10" fill="#7c7c7c"/>
<rect x="95.84" y="1" width="1" height="10" fill="#7c7c7c"/>
<rect x="103.56" y="1" width="1" height="10" fill="#7c7c7c"/>
<rect x="111.28" y="1" width="1" height="10" fill="#7c7c7c"/>
<rect x="119.00" y="1" width="1" height="10" fill="#7c7c7c"/>
<rect x="126.72" y="1" width="1" height="10" fill="#7c7c7c"/>
<rect x="134.44" y="1" width="1" height="10" fill="#7c7c7c"/>
<rect x="142.16" y="1" width="1" height="10" fill="#7c7c7c"/>
<rect x="149.88" y="1" width="1" height="10" fill="#7c7c7c"/>
<rect x="157.60" y="1" width="1" height="10" fill="#7c7c7c"/>
<rect x="165.32" y="1" width="1" height="10" fill="#7c7c7c"/>
<rect x="173.04" y="1" width="1" height="10" fill="#7c7c7c"/>
<rect x="180.76" y="1" width="1" height="10" fill="#7c7c7c"/>
<rect x="188.48" y="1" width="1" height="10" fill="#7c7c7c"/>
<rect x="196.20" y="1" width="1" height="10" fill="#7c7c7c"/>
<rect x="203.92" y="1" width="1" height="10" fill="#7c7c7c"/>
<rect x="211.64" y="1" width="1" height="10" fill="#7c7c7c"/>
<rect x="219.36" y="1" width="1" height="10" fill="#7c7c7c"/>
<rect x="227.08" y="1" width="1" height="10" fill="#7c7c7c"/>
<rect x="234.80" y="1" width="1" height="10" fill="#7c7c7c"/>
<rect x="242.52" y="1" width="1" height="10" fill="#7c7c7c"/>
<rect x="250.24" y="1" width="1" height="10" fill="#7c7c7c"/>
<rect x="257.96" y="1" width="1" height="10" fill="#7c7c7c"/>
<rect x="265.68" y="1" width="1" height="10" fill="#7c7c7c"/>
<rect x="273.40" y="1" width="1" height="10" fill="#7c7c7c"/>
<rect x="281.12" y="1" width="1" height="10" fill="#7c7c7c"/>
<rect x="288.84" y="1" width="1" height="10" fill="#7c7c7c"/>
<rect x="296.56" y="1" width="1" height="10" fill="#7c7c7c"/>
<rect x="304.28" y="1" width="1" height="10" fill="#7c7c7c"/>
<rect x="312.00" y="1" width="1" height="10" fill="#7c7c7c"/>
<rect x="319.72" y="1" width="1" height="10" fill="#7c7c7c"/>
<rect x="327.44" y="1" width="1" height="10" fill="#7c7c7c"/>
<rect x="335.16" y="1" width="1" height="10" fill="#7c7c7c"/>
<rect x="342.88" y="1" width="1" height="10" fill="#7c7c7c"/>
<rect x="350.60" y="1" width="1" height="10" fill="#7c7c7c"/>
<rect x="358.32" y="1" width="1" height="10" fill="#7c7c7c"/>
<rect x="366.04" y="1" width="1" height="10" fill="#7c7c7c"/>
<rect x="373.76" y="1" width="1" height="10" fill="#7c7c7c"/>
<rect x="381.48" y="1" width="1" height="10" fill="#7c7c7c"/>
<rect x="389.20" y="1" width="1" height="10" fill="#7c7c7c"/>
<rect x="396.92" y="1" width="1" height="10" fill="#7c7c7c"/>
<rect x="404.64" y="1" width="1" height="10" fill="#7c7c7c"/>
<rect x="412.36" y="1" width="1" height="10" fill="#7c7c7c"/>
<rect x="420.08" y="1" width="1" height="10" fill="#7c7c7c"/>
<rect x="427.80" y="1" width="1" height="10" fill="#7c7c7c"/>
<rect x="435.52" y="1" width="1" height="10" fill="#7c7c7c"/>
<rect x="443.24" y="1" width="1" height="10" fill="#7c7c7c"/>
<rect x="450.96" y="1" width="1" height="10" fill="#7c7c7c"/>
<rect x="458.68" y="1" width="1" height="10" fill="#7c7c7c"/>
<rect x="466.40" y="1" width="1" height="10" fill="#7c7c7c"/>
<rect x="474.12" y="1" width="1" height="10" fill="#7c7c7c"/>
<rect x="481.84" y="1" width="1" height="10" fill="#7c7c7c"/>
<rect x="489.56" y="1" width="1" height="10" fill="#7c7c7c"/>
<rect x="497.28" y="1" width="1" height="10" fill="#7c7c7c"/>
<rect x="505.00" y="1" width="1" height="10" fill="#7c7c7c"/>
<rect x="512.72" y="1" width="1" height="10" fill="#7c7c7c"/>
<rect x="520.44" y="1" width="1" height="10" fill="#7c7c7c"/>
<rect x="528.16" y="1" width="1" height="10" fill="#7c7c7c"/>
<rect x="535.88" y="1" width="1" height="10" fill="#7c7c7c"/>
<rect x="543.60" y="1" width="1" height="10" fill="#7c7c7c"/>
<rect x="551.32" y="1" width="1" height="10" fill="#7c7c7c"/>
<rect x="559.04" y="1" width="1" height="10" fill="#7c7c7c"/>
<rect x="566.76" y="1" width="1" height="10" fill="#7c7c7c"/>
<rect x="574.48" y="1" width="1" height="10" fill="#7c7c7c"/>
<rect x="582.20" y="1" width="1" height="10" fill="#7c7c7c"/>
<rect x="589.92" y="1" width="1" height="10" fill="#7c7c7c"/>
<rect x="597.64" y="1" width="1" height="10" fill="#7c7c7c"/>
<rect x="605.36" y="1" width="1" height="10" fill="#7c7c7c"/>
<rect x="613.08" y="1" width="1" height="10" fill="#7c7c7c"/>
<rect x="620.80" y="1" width="1" height="10" fill="#7c7c7c"/>
<rect x="628.52" y="1" width="1" height="10" fill="#7c7c7c"/>
<rect x="636.24" y="1" width="1" height="10" fill="#7c7c7c"/>
<rect x="643.96" y="1" width="1" height="10" fill="#7c7c7c"/>
<rect x="651.68" y="1" width="1" height="10" fill="#7c7c7c"/>
<rect x="659.40" y="1" width="1" height="10" fill="#7c7c7c"/>
<rect x="667.12" y="1" width="1" height="10" fill="#7c7c7c"/>
<rect x="674.84" y="1" width="1" height="10" fill="#7c7c7c"/>
<rect x="682.56" y="1" width="1" height="10" fill="#7c7c7c"/>
<rect x="690.28" y="1" width="1" height="10" fill="#7c7c7c"/>
<rect x="698.00" y="1" width="1" height="10" fill="#7c7c7c"/>
<rect x="705.72" y="1" width="1" height="10" fill="#7c7c7c"/>
<rect x="713.44" y="1" width="1" height="10" fill="#7c7c7c"/>
<rect x="721.16" y="1" width="1" height="10" fill="#7c7c7c"/>
<rect x="728.88" y="1" width="1" height="10" fill="#7c7c7c"/>
<rect x="736.60" y="1" width="1" height="10" fill="#7c7c7c"/>
<rect x="744.32" y="1" width="1" height="10" fill="#7c7c7c"/>
<rect x="752.04" y="1" width="1" height="10" fill="#7c7c7c"/>
<rect x="759.76" y="1" width="1" height="10" fill="#7c7c7c"/>
<rect x="767.48" y="1" width="1" height="10" fill="#7c7c7c"/>
<rect x="775.20" y="1" width="1" height="10" fill="#7c7c7c"/>
<rect x="782.92" y="1" width="1" height="10" fill="#7c7c7c"/>
<rect x="790.64" y="1" width="1" height="10" fill="#7c7c7c"/>
<rect x="798.36" y="1" width="1" height="10" fill="#7c7c7c"/>
<rect x="806.08" y="1" width="1" height="10" fill="#7c7c7c"/>
<rect x="813.80" y="1" width="1" height="10" fill="#7c7c7c"/>
<text x="80.90" y="20.3" text-anchor="middle" fill="#c4c4c4">5</text>
<text x="119.50" y="20.3" text-anchor="middle" fill="#c4c4c4">10</text>
<text x="158.10" y="20.3" text-anchor="middle" fill="#c4c4c4">15</text>
<text x="196.70" y="20.3" text-anchor="middle" fill="#c4c4c4">20</text>
<text x="235.30" y="20.3" text-anchor="middle" fill="#c4c4c4">25</text>
<text x="273.90" y="20.3" text-anchor="middle" fill="#c4c4c4">30</text>
<text x="312.50" y="20.3" text-anchor="middle" fill="#c4c4c4">35</text>
<text x="351.10" y="20.3" text-anchor="middle" fill="#c4c4c4">40</text>
<text x="389.70" y="20.3" text-anchor="middle" fill="#c4c4c4">45</text>
<text x="428.30" y="20.3" text-anchor="middle" fill="#c4c4c4">50</text>
<text x="466.90" y="20.3" text-anchor="middle" fill="#c4c4c4">55</text>
<text x="505.50" y="20.3" text-anchor="middle" fill="#c4c4c4">60</text>
<text x="544.10" y="20.3" text-anchor="middle" fill="#c4c4c4">65</text>
<text x="582.70" y="20.3" text-anchor="middle" fill="#c4c4c4">70</text>
<text x="621.30" y="20.3" text-anchor="middle" fill="#c4c4c4">75</text>
<text x="659.90" y="20.3" text-anchor="middle" fill="#c4c4c4">80</text>
<text x="698.50" y="20.3" text-anchor="middle" fill="#c4c4c4">85</text>
<text x="737.10" y="20.3" text-anchor="middle" fill="#c4c4c4">90</text>
<text x="775.70" y="20.3" text-anchor="middle" fill="#c4c4c4">95</text>
<text x="814.30" y="20.3" text-anchor="middle" fill="#c4c4c4">100</text>
</svg>
</div>
<!-- ================= TIME SLIDER / STATUS ================= -->
<div id="timeslider">
  <div class="tsbtn" style="left:0;top:1px;width:12.500px;height:13px;"></div>
  <div class="tsbtn" style="left:13px;top:1px;width:97.500px;height:13px;"></div>
  <div class="tsbtn" style="left:111px;top:1px;width:12.500px;height:13px;"></div>
  <div class="t" style="left:13px;top:1.500px;width:97px;text-align:center;color:#e0e0e0;font-size:8.800px;">0 / 100</div>
  <div class="t" style="left:3.500px;top:1px;color:#dcdcdc;font-size:9.500px;">&lt;</div>
  <div class="t" style="left:114.500px;top:1px;color:#dcdcdc;font-size:9.500px;">&gt;</div>
</div>
<div id="status">
  <!-- coordinates: page y - 732 -->
  <div style="left:1px;top:0.500px;width:76.500px;height:18px;background:#e6c9c9;"></div>
  <div style="left:1px;top:18.500px;width:76.500px;height:1px;background:#8a8a8a;"></div>
  <div style="left:1px;top:19.500px;width:76.500px;height:16.500px;background:#fdfdfd;"></div>
  <div class="t" style="left:5.500px;top:21px;color:#e0201c;font-size:10px;letter-spacing:-0.600px;letter-spacing:0.500px;">--</div>
  <div class="t" style="left:24px;top:21.500px;color:#e0201c;font-size:10px;letter-spacing:-0.600px;">所在行:</div>
  <div class="t" style="left:65.500px;top:21px;color:#e0201c;font-size:10px;letter-spacing:-0.600px;">&lt;</div>
  <div class="field" style="left:83px;top:1px;width:241.500px;">未选定任何对象</div>
  <div class="field" style="left:83px;top:20px;width:457.500px;">单击或单击并拖动以选择对象</div>
  <div class="t" style="left:368px;top:4px;color:#d8d8d8;font-size:8.600px;">X:</div>
  <div class="nfield" style="left:378px;top:2px;width:44px;"></div>
  <div class="t" style="left:432px;top:4px;color:#d8d8d8;font-size:8.600px;">Y:</div>
  <div class="nfield" style="left:441.500px;top:2px;width:44px;"></div>
  <div class="t" style="left:496px;top:4px;color:#d8d8d8;font-size:8.600px;">Z:</div>
  <div class="nfield" style="left:505px;top:2px;width:44px;"></div>
  <div class="field" style="left:561px;top:1px;width:78.500px;word-spacing:1.500px;">栅格 = <span style="position:static;font-size:9px;letter-spacing:-0.400px;">0.0mm</span></div>
  <div style="left:543px;top:20.500px;width:16px;height:17.500px;background:#3b80da;border:1px solid #1e3a68;"></div>
  <div class="field" style="left:561px;top:20px;width:78.500px;">添加时间标记</div>
  <div class="sbtn" style="left:641.500px;top:1px;width:32px;height:37px;"></div>
  <div class="sbtn" style="left:676.500px;top:1px;width:50.500px;">自动关键点</div>
  <div class="sbtn" style="left:676.500px;top:20px;width:50.500px;">设置关键点</div>
  <div style="left:728.500px;top:1px;width:94px;height:15.500px;background:linear-gradient(#ffffff,#f4f4f4 50%,#d6d6d6);border:1px solid #222;"></div>
  <div class="t" style="left:731.500px;top:3.500px;color:#111;font-size:10px;letter-spacing:-0.600px;">选定对象</div>
  <div class="sbtn" style="left:749px;top:20px;width:73.500px;">关键点过滤器...</div>
  <div class="nfield" style="left:847.500px;top:20px;width:51px;height:17px;"></div>
  <div class="t" style="left:851px;top:22.500px;color:#cfcfcf;font-size:8.600px;">0</div>
  <div style="left:0;top:37px;width:1000px;height:1px;background:#1d2b45;"></div>
</div>

<svg id="boticons" style="left:0;top:0" width="1000" height="770" viewBox="0 0 1000 770">
<defs>
  <g id="fly2"><path d="M0 3 L3 0 L3.600 0.600 L0.600 3.600Z" fill="#e8e8e8"/><path d="M1.400 3.800 L3.800 1.400 L3.800 3.800Z" fill="#1c1c1c"/></g>
</defs>
<!-- trackbar icon -->
<rect x="10" y="713" width="14" height="5.200" fill="#e4e4e4"/>
<path d="M11.500 715 l2.300 1.300 l2.300 -1.300 l2.300 1.300 l2.300 -1.300 l2 1.300" stroke="#444" stroke-width="0.900" fill="none"/>
<g stroke="#cfcfcf" stroke-width="1" fill="none"><path d="M13.700 718.500 v4.300 M20.300 718.500 v4.300 M12.200 721 h3 M18.800 721 h3"/></g>
<rect x="10" y="724" width="14" height="2.200" fill="#c2c2c2"/>
<!-- yellow frame marker -->
<rect x="40" y="711.300" width="5" height="18" fill="#a39a22"/>
<rect x="42" y="711.300" width="1" height="9" fill="#d2c84c"/>
<text x="42.500" y="729" text-anchor="middle" font-family="Liberation Sans,sans-serif" font-size="8.600" fill="#ece45a">0</text>
<!-- lock -->
<path d="M332.800 740.500 v-2 a1.900 1.900 0 0 1 3.800 0 v2" fill="none" stroke="#d4d4d4" stroke-width="1.100"/>
<rect x="331" y="740.500" width="7.400" height="6" fill="#dcdcdc"/><rect x="334.200" y="742.300" width="1" height="2.400" fill="#444"/>
<!-- abs/rel -->
<rect x="350.500" y="735.500" width="11" height="11" fill="#ececec"/>
<circle cx="356" cy="741" r="3.200" fill="#ececec" stroke="#555" stroke-width="1.100"/>
<path d="M350.500 735.500 l3 3 M361.500 735.500 l-3 3 M350.500 746.500 l3 -3 M361.500 746.500 l-3 -3" stroke="#555" stroke-width="1.100"/>
<!-- blue icon -->
<rect x="546.500" y="757" width="8" height="8" rx="1.300" fill="none" stroke="#f4f4f4" stroke-width="1.300"/>
<rect x="548.800" y="755" width="8" height="8" rx="1.300" fill="none" stroke="#bcd6f6" stroke-width="0.900"/>
<!-- key -->
<circle cx="652.500" cy="749.500" r="2.800" fill="none" stroke="#0e0e0e" stroke-width="1.700"/>
<path d="M655.500 749.500 h12.500 M664 749.500 v3 M667 749.500 v3.200" stroke="#0e0e0e" stroke-width="1.700" fill="none"/>
<!-- dropdown arrow -->
<path d="M814.500 739.300 h5 l-2.500 2.800z" fill="#111"/>
<!-- curve icon -->
<path d="M733 763 q3.500 -16 6.500 -3 q2 7 5 -6" fill="none" stroke="#c8505a" stroke-width="1.150"/>
<use href="#fly2" x="743" y="764.500"/>
<!-- key mode toggle -->
<path d="M833.500 735.500 v9.500 M834 740.300 l5.500 -4.300 v8.600z" stroke="#e8e8e8" stroke-width="1.100" fill="none"/>
<!-- |<< >>| -->
<path d="M829.500 756 v9 M843 756 v9" stroke="#e0e0e0" stroke-width="1.300"/>
<path d="M835.500 757 l-4.500 3.500 l4.500 3.500z M837 757 l4.500 3.500 l-4.500 3.500z" fill="#e0e0e0"/>
<!-- spinner -->
<rect x="898.500" y="752.500" width="7.500" height="16" fill="#2c2c2c"/>
<path d="M900.200 758.800 l2 -2.600 l2 2.600z M900.200 762.200 l2 2.600 l2 -2.600z" fill="#e4e4e4"/>
<!-- time config -->
<rect x="912" y="753" width="12.500" height="11.500" fill="#e8ecf2"/>
<rect x="912" y="753" width="5.600" height="5" fill="#2f6cc0"/>
<rect x="919.200" y="753.500" width="1.200" height="5" fill="#5a88c8"/>
<rect x="913" y="760" width="2.400" height="2.400" fill="#3a5a90"/><rect x="916.200" y="760" width="2.400" height="2.400" fill="#3a5a90"/>
<circle cx="921.500" cy="761.300" r="3.200" fill="#f8f8f8" stroke="#5a6478" stroke-width="0.800"/><path d="M921.500 759.500 v2 h1.600" stroke="#333" stroke-width="0.700" fill="none"/>
<!-- region zoom -->
<rect x="929.500" y="752.800" width="8" height="8" fill="none" stroke="#e8e8e8" stroke-width="1.300" stroke-dasharray="1.600 1.100"/>
<rect x="936" y="759" width="3.600" height="3.400" fill="#f8f8f8"/>
<!-- pan hand -->
<path d="M950.500 764.500 q-1.500 -2.500 -3 -5.500 q1 -1.200 2.400 0.600 l0.400 0.600 l-0.800 -5.400 q1.200 -1 1.700 0.300 l0.900 3.600 l0 -5.300 q1.200 -0.900 1.700 0.200 l0.300 5 l1 -4.600 q1.200 -0.600 1.500 0.500 l-0.600 5 l1.600 -3.300 q1.200 -0.300 1.100 0.800 q-1 3.500 -1.600 5 q-0.500 1.700 -1.200 2.500z" fill="#f8f8f8"/>
<!-- zoom extents selected -->
<path d="M968.300 739.500 l1.400 -1.600 h4.600 v5.600 l-1.400 1.600 h-4.600z" fill="#5cae4a"/><path d="M968.300 739.500 h4.600 v5.600 M972.900 739.500 l1.400 -1.600" stroke="#8fd67c" stroke-width="0.700" fill="none"/>
<circle cx="976.300" cy="735.600" r="1" fill="#d8d8d8"/><circle cx="965.800" cy="746.500" r="1" fill="#c8c8c8"/>
<use href="#fly2" x="975.800" y="745"/>
<!-- zoom extents all -->
<g fill="#ececec"><rect x="986.300" y="735.300" width="3.600" height="4"/><rect x="990.700" y="735.300" width="3.600" height="4"/><rect x="990.700" y="740.100" width="3.600" height="4"/></g>
<path d="M983 741.800 l1.400 -1.600 h5 v5.600 l-1.400 1.600 h-5z" fill="#5cae4a"/><path d="M983 741.800 h5 v5.600 M988 741.800 l1.400 -1.600" stroke="#8fd67c" stroke-width="0.700" fill="none"/>
<use href="#fly2" x="993.800" y="745"/>
<!-- orbit -->
<path d="M966.500 762 l4.500 -6 l5.500 5.500z" fill="#e4e4e4"/>
<circle cx="972.300" cy="757.300" r="2.900" fill="#4fa040"/>
<circle cx="970.800" cy="753.300" r="0.900" fill="#d0d0d0"/><circle cx="966" cy="763.300" r="1" fill="#c0c0c0"/>
<use href="#fly2" x="975.800" y="762"/>
<!-- maximize -->
<rect x="984" y="753" width="8" height="8" fill="#ececec"/>
<path d="M985.500 754.500 h3.600 l-1.200 1.200 l3 3 l-1.200 1.200 l-3 -3 l-1.200 1.200z" fill="#333"/>
<rect x="990.300" y="759.300" width="3" height="3" fill="none" stroke="#d8d8d8" stroke-width="0.800"/>
</svg>

<!-- ================= VIEWPORT OVERLAYS ================= -->
<svg id="vpov" style="left:0;top:0" width="1000" height="770" viewBox="0 0 1000 770">
<defs>
<linearGradient id="vc" x1="0" y1="0" x2="1" y2="1"><stop offset="0" stop-color="#b4b6bc"/><stop offset="1" stop-color="#a2a4aa"/></linearGradient>
</defs>
<!-- view cube -->
<ellipse cx="812.800" cy="123" rx="29.200" ry="3.400" fill="#b2b2b2"/>
<ellipse cx="812.800" cy="123" rx="25.200" ry="2.200" fill="#2b2b2b"/>
<rect x="801" y="97.500" width="24" height="23.700" fill="url(#vc)"/>
<rect x="801" y="97.500" width="24" height="1" fill="#8a8c92"/>
<text x="813" y="114.300" text-anchor="middle" font-family="Liberation Sans,Noto Sans CJK SC,sans-serif" font-size="10.500" fill="#787a80">前</text>
<!-- axis gizmo -->
<path d="M21.300 655.500 v19.500" stroke="#2222b0" stroke-width="1.200"/>
<path d="M21.300 674.500 h18.500" stroke="#a81a1a" stroke-width="1.100"/>
<text x="21.800" y="650.600" font-family="Liberation Sans,sans-serif" font-size="7.200" font-weight="bold" fill="#2a2ab4">z</text>
<text x="22.300" y="669.800" font-family="Liberation Sans,sans-serif" font-size="7.200" font-weight="bold" fill="#2a9a2a">y</text>
<text x="40.300" y="670.300" font-family="Liberation Sans,sans-serif" font-size="7.200" font-weight="bold" fill="#b81818">x</text>
<!-- watermark smudge -->
<path id="blob" d="M767 724.500 C766.500 712 766.500 700 767 690 C769 676 780 668 796 663 C815 658 838 656 857 656.500 C872 657 883 662 886.500 674 C905 675 925 675.500 940 677 C960 679 975 690 978.500 706 C981 722 975 738 960 745 C945 751.500 905 754.500 875 754 C858 753.500 849 752 846 746 C843 738 838 731.500 826 728.500 C812 726.500 785 725 767 724.500 Z" fill="#3a3a3a"/>
<clipPath id="wmclip"><rect x="760" y="730.300" width="90" height="24"/></clipPath>
<g clip-path="url(#wmclip)"><text x="770.500" y="744.300" font-family="Liberation Sans,sans-serif" font-size="25" textLength="67.500" lengthAdjust="spacingAndGlyphs" fill="#fafafa" stroke="#cfcfcf" stroke-width="0.350" paint-order="stroke" opacity="0.960">jingyan</text></g>
<path d="M813.500 739.300 h5.400 l-2.700 3z" fill="#111"/>
</svg>

</body></html>
